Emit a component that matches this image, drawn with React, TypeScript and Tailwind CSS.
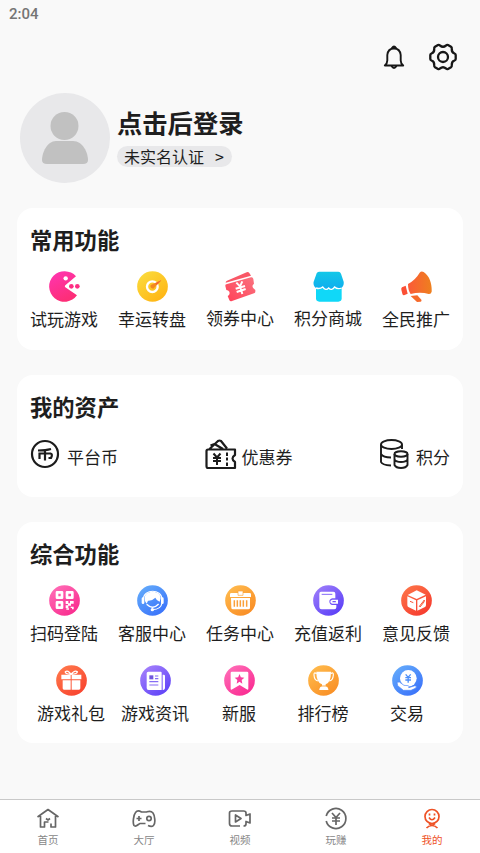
import React from 'react';

const FONT = "font-['Noto_Sans_CJK_SC',sans-serif]";

type Item = { label: string; icon: React.ReactNode; up?: boolean };

// Round gradient badge used by most of the shortcuts
const Badge: React.FC<{ id: string; from: string; to: string; children: React.ReactNode }> = ({ id, from, to, children }) => (
  <svg viewBox="0 0 93 93" className="size-[31px]" fill="none">
    <defs>
      <linearGradient id={id} x1="0.15" y1="0.1" x2="0.8" y2="0.95">
        <stop offset="0" stopColor={from} />
        <stop offset="1" stopColor={to} />
      </linearGradient>
    </defs>
    <circle cx="46.5" cy="46.5" r="46" fill={`url(#${id})`} />
    {children}
  </svg>
);

const common: Item[] = [
  {
    label: '试玩游戏',
    icon: (
      <svg viewBox="0 0 93 93" className="size-[31px]">
        <defs>
          <linearGradient id="pac" x1="0" y1="0" x2="0.4" y2="1">
            <stop offset="0" stopColor="#ff35b4" />
            <stop offset="1" stopColor="#fd2e78" />
          </linearGradient>
        </defs>
        <path d="M81 16A46 46 0 1 0 84 73L49 49Q46 46 49 43Z" fill="url(#pac)" />
        <circle cx="50" cy="22" r="6.5" fill="#fff" />
        <circle cx="67" cy="46" r="7" fill="#fd2f84" />
        <circle cx="85" cy="46" r="7" fill="#fd2f84" />
      </svg>
    ),
  },
  {
    label: '幸运转盘',
    icon: (
      <Badge id="wheel" from="#fbd93a" to="#ffb514">
        <circle cx="46" cy="47" r="16" stroke="#fff" strokeWidth="7" />
        <path d="M73 28L41 42Q38 52 49 53Z" fill="#f4881f" />
        <path d="M73 28L56 36L59 42Z" fill="#f4642f" />
      </Badge>
    ),
  },
  {
    label: '领券中心',
    up: true,
    icon: (
      <svg viewBox="0 0 93 93" className="size-[31px]">
        <defs>
          <linearGradient id="ticket" x1="0" y1="1" x2="1" y2="0">
            <stop offset="0" stopColor="#ff4057" />
            <stop offset="1" stopColor="#fa7480" />
          </linearGradient>
        </defs>
        <path d="M2 35Q2 31 6 29L65 4Q70 2 73 6L78 14Z" fill="#f95766" />
        <path d="M1 45Q0 41 4 40L78 19Q84 18 85 24L87 38Q80 43 84 50Q86 53 91 57V62Q91 66 87 67L21 90Q15 92 13 87L8 75Q16 70 13 62Q10 57 4 57Z" fill="url(#ticket)" />
        <path d="M34 35L45 46L52 31M32 53L60 45M35 63L62 54M45 46L52 69" stroke="#fff" strokeWidth="6" fill="none" />
      </svg>
    ),
  },
  {
    label: '积分商城',
    up: true,
    icon: (
      <svg viewBox="0 0 93 93" className="size-[31px]">
        <defs>
          <linearGradient id="shop" x1="0" y1="0" x2="0" y2="1">
            <stop offset="0" stopColor="#12c8e8" />
            <stop offset="1" stopColor="#10acee" />
          </linearGradient>
        </defs>
        <path d="M9 46H86V82Q86 92 76 92H19Q9 92 9 82Z" fill="#10d8f8" />
        <path d="M18 2H76Q82 2 84 8L92 32Q94 46 82 53Q73 57 65 50Q56 62 47 51Q38 62 29 51Q22 56 13 54Q-1 46 2 32L11 7Q13 2 18 2Z" fill="url(#shop)" />
        <path d="M9 51Q21 55 29 48Q38 61 47 51Q56 61 65 48Q73 56 86 51" stroke="#fff" strokeWidth="4" fill="none" />
      </svg>
    ),
  },
  {
    label: '全民推广',
    icon: (
      <svg viewBox="0 0 93 93" className="size-[31px]">
        <defs>
          <linearGradient id="horn" x1="0" y1="0" x2="1" y2="0">
            <stop offset="0" stopColor="#fb5a38" />
            <stop offset="1" stopColor="#ee801e" />
          </linearGradient>
        </defs>
        <path d="M21 39Q44 26 56 5Q61 -1 68 3C88 16 93 43 92 62Q90 70 83 69Q58 62 29 69Q21 58 21 39Z" fill="url(#horn)" />
        <path d="M3 49L14 44L20 68L9 73Q5 73 4 68L1 56Q0 51 3 49Z" fill="#fb4f35" />
        <path d="M29 75L49 73L61 86Q63 90 59 92L48 93Z" fill="#f66a2b" />
      </svg>
    ),
  },
];

const tools: Item[] = [
  {
    label: '扫码登陆',
    icon: (
      <Badge id="scan" from="#ff69b4" to="#f92c8e">
        <g stroke="#fff" strokeWidth="8" strokeLinejoin="round">
          <path d="M24 22H39V38H24ZM54 22H70V38H54ZM24 52H39V68H24Z" />
        </g>
        <path d="M50 48H58V57H50ZM63 48H74V56H66V62H58V69H50V61H57V55H63ZM65 65H74V73H69V69H65ZM52 70H60V74H52Z" fill="#fff" />
      </Badge>
    ),
  },
  {
    label: '客服中心',
    icon: (
      <Badge id="service" from="#61a8fb" to="#3a73fa">
        <path d="M19 42C20 11 74 11 75 42" stroke="#fff" strokeWidth="3.5" />
        <path d="M23 39C24 14 70 14 71 39L68 50Q59 48 55 38Q45 48 33 47L29 56Q22 50 23 39Z" fill="#fff" />
        <rect x="14" y="37" width="8" height="20" rx="4" fill="#fff" />
        <rect x="72" y="37" width="8" height="20" rx="4" fill="#fff" />
        <path d="M29 58Q47 76 65 57" stroke="#fff" strokeWidth="4" />
        <path d="M75 54Q72 73 47 74" stroke="#fff" strokeWidth="3.5" />
        <circle cx="46" cy="74" r="5" fill="#fff" />
      </Badge>
    ),
  },
  {
    label: '任务中心',
    icon: (
      <Badge id="task" from="#ffb84b" to="#f98d25">
        <path d="M19 24H74Q78 24 78 28V36H15V28Q15 24 19 24ZM18 39H75V68Q75 73 70 73H24Q19 73 19 68Z" fill="#fff" />
        <path d="M39 18H54V31H39Z" fill="#fff" stroke="#fba53b" strokeWidth="2" />
        <path d="M28 46V65M37 46V65M46 46V65M55 46V65M65 46V65" stroke="#fba03a" strokeWidth="4.5" />
      </Badge>
    ),
  },
  {
    label: '充值返利',
    icon: (
      <Badge id="wallet" from="#9979fa" to="#5b40f7">
        <path d="M24 20H61Q67 20 67 26V40H58Q49 42 49 50Q50 59 58 60H70V67Q70 73 64 73H26Q19 73 19 66V26Q19 20 24 20Z" fill="#fff" />
        <path d="M26 28H58" stroke="#8469f8" strokeWidth="3" />
        <path d="M58 44H75V56H58Q52 55 52 50Q52 45 58 44Z" fill="#fff" />
        <path d="M60 50H67" stroke="#7255f8" strokeWidth="4" strokeLinecap="round" />
      </Badge>
    ),
  },
  {
    label: '意见反馈',
    icon: (
      <Badge id="feedback" from="#fd7147" to="#f63b2e">
        <path d="M47 16L74 29L47 42L20 30Z" fill="#fff" />
        <path d="M19 34L45 46V77L22 66Q19 64 19 60ZM75 34L49 46V77L72 66Q75 64 75 60Z" fill="#fff" />
        <path d="M27 49L37 53" stroke="#f95639" strokeWidth="3" />
        <path d="M55 64L70 45L69 51L57 66Z" stroke="#f95639" strokeWidth="3" />
      </Badge>
    ),
  },
];

const more: Item[] = [
  {
    label: '游戏礼包',
    icon: (
      <Badge id="gift" from="#ff754a" to="#f8442f">
        <path d="M16 29H44V43H16ZM47 29H76V43H47ZM20 46H44V74H24Q20 74 20 70ZM47 46H73V70Q73 74 69 74H47Z" fill="#fff" />
        <path d="M45 28Q36 14 28 20Q26 27 45 28Q56 14 64 20Q65 27 45 28Z" stroke="#fff" strokeWidth="4" />
      </Badge>
    ),
  },
  {
    label: '游戏资讯',
    icon: (
      <Badge id="news" from="#a17dfb" to="#6044f8">
        <path d="M25 20H62Q65 20 65 24V75H26Q20 75 20 69V25Q20 20 25 20ZM68 29H71Q75 29 75 33V69Q75 74 70 75H68Z" fill="#fff" />
        <path d="M28 31H40V43H28Z" fill="#7158de" />
        <path d="M45 33H55M45 41H55M28 50H55M28 60H55" stroke="#866df4" strokeWidth="3.5" />
      </Badge>
    ),
  },
  {
    label: '新服',
    icon: (
      <Badge id="server" from="#ff69b5" to="#fa2c92">
        <path d="M24 20H69Q73 20 73 24V71Q73 76 68 73L47 60L25 73Q20 76 20 71V24Q20 20 24 20Z" fill="#fff" />
        <path d="M46.5 27L50.5 37L61 38L53 45L55 56L46.5 50L38 56L40 45L32 38L42.5 37Z" fill="#f93e9d" />
      </Badge>
    ),
  },
  {
    label: '排行榜',
    icon: (
      <Badge id="rank" from="#ffb94b" to="#f98f25">
        <path d="M25 20H69Q69 53 53 58V63Q59 64 61 72V75H34V72Q36 64 42 63V58Q25 53 25 20Z" fill="#fff" />
        <path d="M26 26Q17 20 18 30Q19 47 31 48M68 26Q77 20 76 30Q75 47 63 48" stroke="#fff" strokeWidth="3.5" />
        <path d="M34 63H60" stroke="#fa9d31" strokeWidth="2.5" />
      </Badge>
    ),
  },
  {
    label: '交易',
    icon: (
      <Badge id="trade" from="#62a8fb" to="#3b73fa">
        <circle cx="49" cy="40" r="25" fill="#fff" />
        <path d="M41 28L48.5 37L56 28M40 38H57M40 45H57M48.5 37V53" stroke="#4c8ffa" strokeWidth="4" />
        <path d="M15 52L22 51L36 61L48 62Q54 64 50 68L69 62Q77 64 70 70L57 76H34L17 62Z" fill="#fff" stroke="#4b86fb" strokeWidth="2" />
      </Badge>
    ),
  },
];

const Shortcut: React.FC<{ item: Item }> = ({ item }) => (
  <div className="flex flex-col items-center">
    {item.icon}
    <span className={`text-[17px] leading-6 whitespace-nowrap ${item.up ? 'mt-1' : 'mt-[5px]'}`}>{item.label}</span>
  </div>
);

const tabs: Item[] = [
  {
    label: '首页',
    icon: <path d="M1.5 10L12 2.5L22.5 10M4.5 9V20H8.5V15H12.5M19.5 9V20H15V16.5M10 11.5L12 13L14 11.5" />,
  },
  {
    label: '大厅',
    icon: (
      <>
        <path d="M16 18.5C18 19.5 20 20 21.5 18.5C24 16 22.5 8 21 6C18.5 3 16 4.5 14.5 5H9.5C7 3.5 5 3.5 3.5 5.5C1.5 8 .5 16 2 18.5C4 20.5 6.5 17 8 16.5H13.5" />
        <path d="M4.5 11.5H9.5M7 9V14" />
        <circle cx="17" cy="11.5" r="2.2" />
      </>
    ),
  },
  {
    label: '视频',
    icon: <path d="M12 19H4Q1.5 19 1.5 16.5V6Q1.5 4 4 4H15.5Q18 4 18 6V8.500L22 7V16L18 14.5V17Q18 19 15.5 19M7.5 8V15L13 11.5Z" />,
  },
  {
    label: '玩赚',
    icon: <path d="M2.2 9A10 10 0 1 1 2.2 14M8 6L12 10.5L16 6M8 11H16M8 14H16M12 10.5V18" />,
  },
  {
    label: '我的',
    icon: (
      <>
        <circle cx="12" cy="9.5" r="7" />
        <path d="M9 10.5Q12 15 15 10.5M9.5 6.5V8.5M14.5 6.5V8.5M6.5 21Q9 18.5 12 18.5Q15 18.5 17.5 21M9 16.5L12 18.5L15 16.5" />
      </>
    ),
  },
];

const App: React.FC = () => {
  return (
    <div className={`${FONT} flex h-[853px] w-[480px] flex-col overflow-hidden bg-[#f9f9f9] text-[#1e1e1e]`}>
      <div className="h-[42px] pt-1 pl-[9px] font-[Roboto] text-[15px] leading-5 font-medium text-[#757575]">2:04</div>

      <div className="flex h-[30px] items-center justify-end gap-[23px] pr-[23px]">
        <svg viewBox="0 0 24 28" className="h-7 w-6" fill="none" stroke="#171717" strokeWidth="1.9" strokeLinejoin="round">
          <path d="M2.8 22.5H21.2Q18.7 20.5 18.7 17.5V12Q18 5.5 12 5.5Q6 5.5 5.3 12V17.5Q5.3 20.5 2.8 22.5ZM9.5 23Q12 27 14.5 23" />
          <path d="M10 5Q12 2 14 5Z" fill="#171717" />
        </svg>
        <svg viewBox="0 0 28 28" className="size-7" fill="none" stroke="#171717" strokeWidth="2.3" strokeLinejoin="round">
          <path d="M9 2Q10 1.500 11 2.500Q14 5 17 2.500Q18 1.500 19 2L22 3.800Q23 4.500 22.800 6Q22.500 9.500 25.500 10.500Q26.700 11 26.700 12V16Q26.700 17 25.500 17.500Q22.500 18.500 22.800 22Q23 23.500 22 24.200L19 26Q18 26.500 17 25.500Q14 23 11 25.500Q10 26.500 9 26L6 24.200Q5 23.500 5.200 22Q5.500 18.500 2.500 17.500Q1.300 17 1.300 16V12Q1.300 11 2.500 10.500Q5.500 9.500 5.200 6Q5 4.500 6 3.800Z" />
          <circle cx="14" cy="14" r="5" />
        </svg>
      </div>

      {/* Profile */}
      <div className="mt-[21px] flex h-[90px] pl-5">
        <div className="flex size-[90px] items-center justify-center rounded-full bg-[#e8e8ea]">
          <svg viewBox="0 0 90 90" className="size-[90px]" fill="#c1c1c1">
            <circle cx="44.5" cy="33" r="14" />
            <path d="M36 48H53C63 48 68 60 68 67Q68 71 63 71H27Q22 71 22 67C22 60 27 48 36 48Z" />
          </svg>
        </div>
        <div className="pt-3 pl-[7px]">
          <div className="text-[25.3px] leading-[34px] font-bold">点击后登录</div>
          <div className="mt-[7px] flex h-[21px] w-[115px] items-center rounded-full bg-[#e8e8ea] pl-[7px] text-[16px] leading-[21px]">
            <span>未实名认证</span>
            <span className="ml-[11px]">&gt;</span>
          </div>
        </div>
      </div>

      <div className="mx-[17px] mt-[25px] h-[142px] rounded-2xl bg-white pt-4">
        <h3 className="pl-[13px] text-[22.3px] leading-[30px] font-bold">常用功能</h3>
        <div className="mt-[17px] grid grid-cols-5 px-[3px]">
          {common.map((item) => (
            <Shortcut key={item.label} item={item} />
          ))}
        </div>
      </div>

      <div className="mx-[17px] mt-[25px] h-[122px] rounded-2xl bg-white pt-4">
        <h3 className="pl-[13px] text-[22.3px] leading-[30px] font-bold">我的资产</h3>
        <div className="mt-[17px] flex justify-between px-[13px] text-[17px] leading-6">
          <div className="flex items-center">
            <svg viewBox="0 0 30 32" className="h-8 w-[30px]" fill="none" stroke="#1c1c1c" strokeWidth="2.2">
              <circle cx="15" cy="16" r="13" />
              <path d="M8 12.5Q16 12.5 21 11M9.5 21V15.5H20.5Q23 16 21 20L18.5 20M15 11.5V22.5" />
            </svg>
            <span className="mt-[6px] ml-[7px]">平台币</span>
          </div>
          <div className="flex items-center">
            <svg viewBox="0 0 32 32" className="size-8" fill="none" stroke="#1c1c1c" strokeWidth="2.2" strokeLinejoin="round">
              <path d="M3 11.5H30V17Q25 20.5 30 24V30H3Q1.5 30 1.5 28V13Q1.5 11.5 3 11.5ZM4.5 11L13 3Q14.5 2 16 3L22 10.5M5.5 7.5L9.5 6L18 11" />
              <path d="M8.5 15.5L12 19.5L15.5 15.5M8 20H16M8 23H16M12 19V27M22 14.5V18M22 19.5V22.5M22 24.5V28" strokeWidth="2" />
            </svg>
            <span className="mt-[6px] ml-[5px]">优惠券</span>
          </div>
          <div className="flex items-center">
            <svg viewBox="0 0 30 32" className="h-8 w-[30px]" fill="none" stroke="#1c1c1c" strokeWidth="1.9">
              <ellipse cx="12.5" cy="6.5" rx="10.5" ry="4.5" />
              <path d="M2 6.5V24Q3 27 12 27.5M23 6.5V11M2 16Q4 19.5 12 19.5" />
              <ellipse cx="22" cy="16" rx="6.5" ry="2.8" />
              <path d="M15.5 16V27Q17 30 22 30Q27 30 28.5 27V16M15.5 21.5Q17 24 22 24Q27 24 28.5 21.5" />
            </svg>
            <span className="mt-[6px] ml-[7px]">积分</span>
          </div>
        </div>
      </div>

      <div className="mx-[17px] mt-[25px] h-[221px] rounded-2xl bg-white pt-4">
        <h3 className="pl-[13px] text-[22.3px] leading-[30px] font-bold">综合功能</h3>
        <div className="mt-[17px] grid grid-cols-5 px-[3px]">
          {tools.map((item) => (
            <Shortcut key={item.label} item={item} />
          ))}
        </div>
        <div className="mt-5 grid grid-cols-5 pr-[14px] pl-3">
          {more.map((item) => (
            <Shortcut key={item.label} item={item} />
          ))}
        </div>
      </div>

      {/* Bottom tab bar */}
      <div className="mt-auto grid h-[54px] grid-cols-5 border-t border-[#c9c9c9] bg-white pt-[7px]">
        {tabs.map((tab) => (
          <div key={tab.label} className={`flex flex-col items-center ${tab.label === '我的' ? 'text-[#ee5226]' : 'text-[#666]'}`}>
            <svg viewBox="0 0 24 24" className="size-6" fill="none" stroke="currentColor" strokeWidth="1.7" strokeLinejoin="round">
              {tab.icon}
            </svg>
            <span className={`mt-px text-[10.5px] leading-4 ${tab.label === '我的' ? '' : 'text-[#888]'}`}>{tab.label}</span>
          </div>
        ))}
      </div>
    </div>
  );
};

export default App;
